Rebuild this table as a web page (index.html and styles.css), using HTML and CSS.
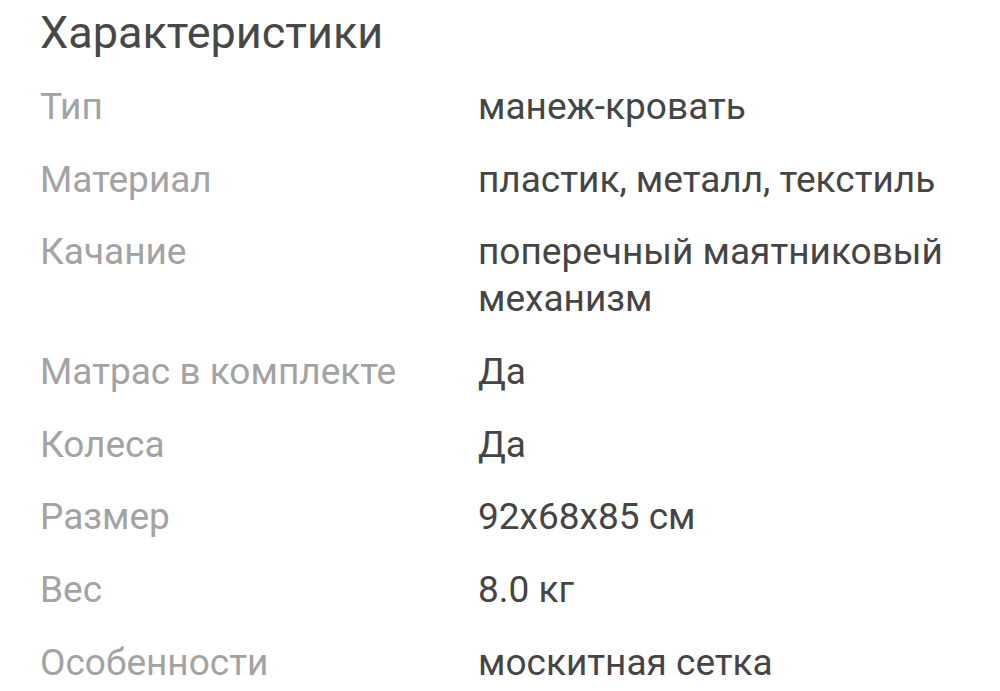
FILE: index.html
```html
<!DOCTYPE html>
<html lang="ru">
<head>
<meta charset="utf-8">
<link rel="stylesheet" href="styles.css">
</head>
<body>
<section class="specs">
  <h2 class="specs-title">Характеристики</h2>
  <dl class="specs-list">
    <dt class="label">Тип</dt><dd class="value">манеж-кровать</dd>
    <dt class="label">Материал</dt><dd class="value">пластик, металл, текстиль</dd>
    <dt class="label">Качание</dt><dd class="value">поперечный маятниковый механизм</dd>
    <dt class="label">Матрас в комплекте</dt><dd class="value">Да</dd>
    <dt class="label">Колеса</dt><dd class="value">Да</dd>
    <dt class="label">Размер</dt><dd class="value">92x68x85 см</dd>
    <dt class="label">Вес</dt><dd class="value">8.0 кг</dd>
    <dt class="label">Особенности</dt><dd class="value">москитная сетка</dd>
  </dl>
</section>
</body>
</html>
```

FILE: styles.css
```css
html, body {
  margin: 0;
  padding: 0;
  background: #ffffff;
}
body {
  font-family: Roboto, "Noto Sans", sans-serif;
  overflow: hidden;
}
.specs {
  padding: 8px 40px 0 40px;
}
.specs-title {
  margin: 0;
  font-size: 45px;
  font-weight: 400;
  line-height: 49px;
  color: #474747;
}
.specs-list {
  margin: 26px 0 0 0;
  display: grid;
  grid-template-columns: 438px 482px;
  row-gap: 25.7px;
  font-size: 37px;
  line-height: 47px;
}
.label {
  margin: 0;
  color: #a3a3a3;
}
.value {
  margin: 0;
  color: #454545;
}
```
